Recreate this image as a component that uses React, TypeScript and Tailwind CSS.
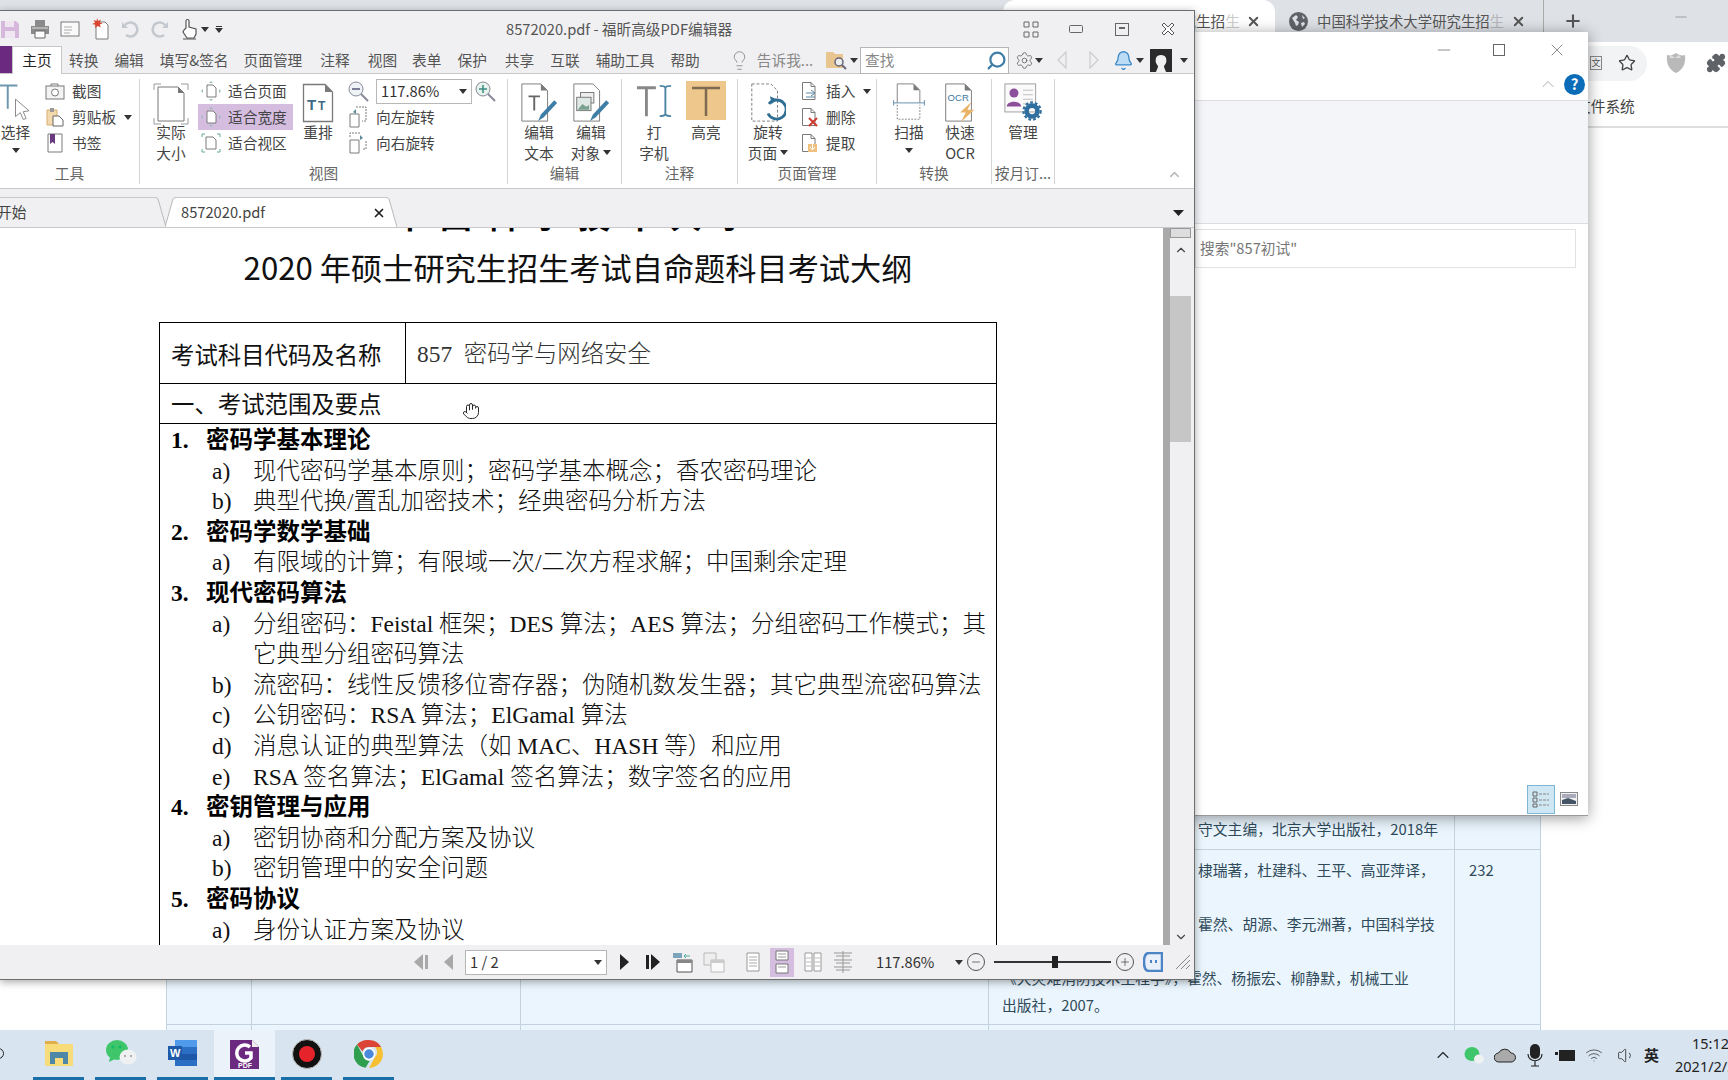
import type { ReactNode } from "react";
import { Hand, Puzzle, Star, X, Plus, Minus, ChevronUp, ChevronDown, Search, Settings, Bell, Lightbulb, Wifi, Volume1 } from "lucide-react";

const S = "#7a7a7a";

function Caret({ className = "" }: { className?: string }) {
  return (
    <svg width="8" height="5" viewBox="0 0 8 5" className={className}>
      <path d="M0 0h8L4 5z" fill="#333" />
    </svg>
  );
}

function Doc({ w = 34, h = 40, dash = false, children }: { w?: number; h?: number; dash?: boolean; children?: ReactNode }) {
  const f = 9;
  return (
    <svg width={w} height={h} viewBox={`0 0 ${w} ${h}`}>
      <path d={`M1.5 1.5H${w - f}L${w - 1.5} ${f}V${h - 1.5}H1.5z`} fill="#fff" stroke={S} strokeWidth="1.3" strokeDasharray={dash ? "3 2" : undefined} />
      <path d={`M${w - f} 1.5V${f}H${w - 1.5}z`} fill={S} />
      {children}
    </svg>
  );
}

function MiniDoc({ children }: { children?: ReactNode }) {
  return (
    <svg width="20" height="20" viewBox="0 0 20 20">
      <path d="M3.5 1.5H12l4 4v13H3.5z" fill="#fff" stroke={S} />
      <path d="M12 1.5v4h4" fill="none" stroke={S} />
      {children}
    </svg>
  );
}

function SmallBtn({ icon, label, active, caret }: { icon: ReactNode; label: string; active?: boolean; caret?: boolean }) {
  return (
    <div className={`flex h-[26px] items-center gap-[7px] pl-[3px] ${active ? "bg-[#d5bde0]" : ""}`}>
      <span className="flex w-[20px] shrink-0 justify-center">{icon}</span>
      <span className="whitespace-nowrap">{label}</span>
      {caret && <Caret className="ml-[1px]" />}
    </div>
  );
}

function BigBtn({ w, icon, lines, caret, caretBelow, hl }: { w: number; icon: ReactNode; lines: string[]; caret?: boolean; caretBelow?: boolean; hl?: boolean }) {
  return (
    <div className="flex shrink-0 flex-col items-center" style={{ width: w }}>
      <div className={`flex h-[42px] w-full items-start justify-center ${hl ? "pt-[2px]" : "pt-[4px]"}`}>{icon}</div>
      {lines.map((l, i) => (
        <div key={i} className="flex h-[21px] items-center justify-center gap-[3px] leading-[21px] whitespace-nowrap">
          {l}
          {caret && i === lines.length - 1 && <Caret />}
        </div>
      ))}
      {caretBelow && (
        <div className="flex h-[17px] items-center">
          <Caret />
        </div>
      )}
    </div>
  );
}

function Group({ w, label, children }: { w: number; label: string; children: ReactNode }) {
  return (
    <div className="flex h-[105px] shrink-0 flex-col border-r border-[#d4d4d6]" style={{ width: w }}>
      <div className="flex h-[84px] items-start">{children}</div>
      <div className="text-center leading-[19px] text-[#666]">{label}</div>
    </div>
  );
}

function QuickIcons() {
  return (
    <div className="flex h-[24px] w-[506px] shrink-0 items-center">
      <svg width="20" height="20" viewBox="0 0 20 20"><path d="M1 2h15l3 3v14H1z" fill="#d6b8dc" /><path d="M5 2h9v6H5zM5 12h10v7H5z" fill="#efe6f1" /></svg>
      <svg width="22" height="22" viewBox="0 0 22 22" className="ml-[9px]"><path d="M6 2h10v6H6zM2 8h18v8H2z" fill="#8b8b8b" /><path d="M6 13h10v7H6z" fill="#fff" stroke="#666" /><path d="M3 10h16" stroke="#ddd" /></svg>
      <svg width="20" height="18" viewBox="0 0 20 18" className="ml-[9px]"><rect x="1" y="2" width="18" height="14" fill="#fafafa" stroke={S} /><path d="M4 7h8M4 10h8M4 13h6" stroke="#aaa" /></svg>
      <svg width="20" height="24" viewBox="0 0 20 24" className="ml-[10px]"><path d="M6 5h9l3 3v14H6z" fill="#fff" stroke={S} /><path d="M7 1l1.2 3L11 2.5 9.8 5.5l3 1-3 1 1 3-3-1.6L5 11l.4-3.2L2 7l3-1.2L3.600 3l3 1z" fill="#d8452f" /></svg>
      <svg width="20" height="20" viewBox="0 0 20 20" className="ml-[10px]"><path d="M5 6a7 7 0 1 1 1 10" fill="none" stroke="#c4c8cf" strokeWidth="2.600" /><path d="M2 3v6h6z" fill="#c4c8cf" /></svg>
      <svg width="20" height="20" viewBox="0 0 20 20" className="ml-[10px]"><path d="M15 6a7 7 0 1 0-1 10" fill="none" stroke="#c4c8cf" strokeWidth="2.600" /><path d="M18 3v6h-6z" fill="#c4c8cf" /></svg>
      <svg width="20" height="22" viewBox="0 0 20 22" className="ml-[10px]"><path d="M6 10V3a1.500 1.500 0 0 1 3 0v6l7 2v5l-2 4H7l-4-6 1-2z" fill="#fff" stroke="#555" strokeWidth="1.200" /><path d="M3 21h13" stroke="#555" /></svg>
      <Caret className="ml-[1px]" />
      <span className="ml-[6px] flex flex-col items-center gap-[1px]"><span className="h-[1px] w-[6px] bg-[#333]" /><Caret /></span>
    </div>
  );
}

function TitleBar() {
  return (
    <div className="flex h-[36px] items-center text-[#555]">
      <QuickIcons />
      <div className="flex-1 text-[14.700px] whitespace-nowrap">8572020.pdf - 福昕高级PDF编辑器</div>
      <div className="flex items-center text-[#555]">
        <svg width="16" height="17" viewBox="0 0 16 17"><path d="M1 1h5v5H1zM10 1h5v5h-5zM1 11h5v5H1zM10 11h5v5h-5z" fill="none" stroke="#666" /></svg>
        <svg width="14" height="8" viewBox="0 0 14 8" className="ml-[30px]"><rect x="0.500" y="0.500" width="13" height="7" rx="1" fill="none" stroke="#666" /></svg>
        <svg width="14" height="13" viewBox="0 0 14 13" className="ml-[32px]"><rect x="0.500" y="0.500" width="13" height="12" fill="none" stroke="#666" /><path d="M4 4h6v2H4z" fill="#666" /></svg>
        <svg width="14" height="14" viewBox="0 0 14 14" className="ml-[32px] mr-[19px]"><path d="M1 3l2-2 4 4 4-4 2 2-4 4 4 4-2 2-4-4-4 4-2-2 4-4z" fill="#fff" stroke="#555" /></svg>
      </div>
    </div>
  );
}

const menus: [string, number][] = [
  ["转换", 7], ["编辑", 16], ["填写&签名", 16], ["页面管理", 15], ["注释", 18], ["视图", 18],
  ["表单", 15], ["保护", 16], ["共享", 18], ["互联", 16], ["辅助工具", 16], ["帮助", 16],
];

function MenuBar() {
  return (
    <div className="flex h-[27px] items-end border-b border-[#c8c8ca]">
      <div className="h-[27px] w-[12px] shrink-0 bg-[#6b2a80]" />
      <div className="-mb-px flex h-[28px] w-[50px] shrink-0 items-center justify-center border border-b-0 border-[#c8c8ca] bg-white text-[#222]">主页</div>
      <div className="flex h-[26px] items-center text-[#555]">
        {menus.map(([m, ml]) => (
          <span key={m} className="whitespace-nowrap" style={{ marginLeft: ml }}>{m}</span>
        ))}
        <Lightbulb size={21} strokeWidth={1} color="#888" className="ml-[29px]" />
        <span className="ml-[7px] whitespace-nowrap text-[#888]">告诉我...</span>
        <svg width="24" height="20" viewBox="0 0 24 20" className="ml-[12px]"><path d="M1 2h7l2 2h8v14H1z" fill="#e9c690" /><circle cx="14" cy="12" r="4" fill="#eee" stroke="#667" strokeWidth="1.500" /><path d="M17 15l4 4" stroke="#667" strokeWidth="2" /></svg>
        <Caret className="ml-[1px]" />
        <div className="ml-[2px] flex h-[27px] w-[149px] items-center justify-between border border-[#b5b5b5] bg-white pr-[1px] pl-[4px] text-[#888]">
          查找
          <Search size={21} strokeWidth={2.500} color="#3f7ea6" className="-scale-x-100" />
        </div>
        <Settings size={19} strokeWidth={1.100} color="#666" className="ml-[6px]" />
        <Caret className="ml-[1px]" />
        <svg width="12" height="18" viewBox="0 0 12 18" className="ml-[13px]"><path d="M10 1L2 9l8 8z" fill="none" stroke="#ccc" strokeWidth="1.200" /></svg>
        <svg width="12" height="18" viewBox="0 0 12 18" className="ml-[20px]"><path d="M2 1l8 8-8 8z" fill="none" stroke="#ccc" strokeWidth="1.200" /></svg>
        <Bell size={21} strokeWidth={1.500} color="#3c88c7" fill="#bcdcf5" className="ml-[13px]" />
        <Caret className="ml-[2px]" />
        <svg width="22" height="23" viewBox="0 0 22 23" className="ml-[6px]"><rect width="22" height="23" fill="#2b2b2b" /><path d="M6 23c1-3 2-4 2-6-2-2-3-5-2-8 1-4 9-4 10 0 1 3 0 6-2 8 0 2 1 3 2 6z" fill="#f1f1f1" /></svg>
        <Caret className="ml-[8px]" />
      </div>
    </div>
  );
}

function Ribbon() {
  const fitIcon = (
    <svg width="20" height="20" viewBox="0 0 20 20"><path d="M6 4h6l3 3v9H6z" fill="#fff" stroke={S} /><path d="M10 0l2 2H8zM10 20l-2-2h4zM0 10l2-2v4zM20 10l-2 2V8z" fill="#9bb" /></svg>
  );
  return (
    <div className="flex h-[114px] bg-white pt-[5px] text-[14.700px] leading-none text-[#444]">
      <div className="flex h-[105px] w-[1055px] shrink-0">
        <Group w={140} label="工具">
          <BigBtn
            w={31}
            lines={["选择"]}
            caretBelow
            icon={
              <svg width="32" height="40" viewBox="0 0 32 40"><path d="M-2 2h20M8 2v24" stroke="#6e97ad" strokeWidth="2" fill="none" /><path d="M16 16l0 18 5-4 3 7 3-1-3-7 6-1z" fill="#fff" stroke="#888" /></svg>
            }
          />
          <div className="-mt-[1px] ml-[11px]">
            <SmallBtn label="截图" icon={<svg width="20" height="17" viewBox="0 0 20 17"><rect x="1" y="3" width="18" height="13" fill="#f4f4f4" stroke={S} /><circle cx="10" cy="9.500" r="3.500" fill="#fff" stroke={S} /><path d="M6 3V1h7v2" fill="none" stroke={S} /></svg>} />
            <SmallBtn label="剪贴板" caret icon={<svg width="20" height="20" viewBox="0 0 20 20"><path d="M2 3h10v15H2z" fill="#f3d9ae" stroke="#d6ad6f" /><path d="M5 1h4v4H5z" fill="#999" /><path d="M8 9h6l4 4v6H8z" fill="#fff" stroke="#666" /></svg>} />
            <SmallBtn label="书签" icon={<svg width="16" height="20" viewBox="0 0 16 20"><path d="M1 1h14v18H1z" fill="#fff" stroke={S} /><path d="M3 1h5v10l-2.500-2L3 11z" fill="#6a3a80" /></svg>} />
          </div>
        </Group>
        <Group w={368} label="视图">
          <div className="ml-[5px]">
            <BigBtn
              w={52}
              lines={["实际", "大小"]}
              icon={
                <svg width="36" height="42" viewBox="0 0 36 42">
                  <path d="M1 7V1h7M28 1h7v6M1 35v6h7M28 41h7v-6" fill="none" stroke="#9a9a9a" />
                  <path d="M5 4h20l6 6v28H5z" fill="#fff" stroke="#777" />
                  <path d="M25 4v6h6z" fill="#777" />
                </svg>
              }
            />
          </div>
          <div className="-mt-[1px] ml-[1px] w-[95px] shrink-0">
            <SmallBtn label="适合页面" icon={fitIcon} />
            <SmallBtn label="适合宽度" active icon={fitIcon} />
            <SmallBtn label="适合视区" icon={<svg width="20" height="20" viewBox="0 0 20 20"><path d="M1 4V1h3M16 1h3v3M1 16v3h3M16 19h3v-3" fill="none" stroke="#6a9" /><path d="M5 4h7l3 3v9H5z" fill="#fff" stroke={S} /></svg>} />
          </div>
          <BigBtn
            w={50}
            lines={["重排"]}
            icon={
              <Doc w={32} h={40}>
                <text x="5" y="27" fontSize="15" fontWeight="700" fill="#3d6b85" fontFamily="Liberation Sans">T</text>
                <text x="16" y="27" fontSize="12" fontWeight="700" fill="#3d6b85" fontFamily="Liberation Sans">T</text>
              </Doc>
            }
          />
          <div className="-mt-[1px] ml-[3px] w-[165px]">
            <div className="flex h-[26px] items-center">
              <svg width="24" height="24" viewBox="0 0 24 24"><circle cx="10" cy="10" r="7" fill="#eef4f6" stroke="#889" /><path d="M6 10h8" stroke="#557" strokeWidth="1.500" /><path d="M15 15l7 7" stroke="#889" strokeWidth="2" /></svg>
              <div className="ml-[6px] flex h-[25px] w-[96px] items-center justify-between border border-[#b8b8b8] pr-[4px] pl-[4px] text-[#333]">
                117.86%
                <Caret />
              </div>
              <svg width="24" height="24" viewBox="0 0 24 24" className="ml-[1px]"><circle cx="10" cy="10" r="7" fill="#e6f2ec" stroke="#889" /><path d="M6 10h8M10 6v8" stroke="#3a8a80" strokeWidth="1.500" /><path d="M15 15l7 7" stroke="#889" strokeWidth="2" /></svg>
            </div>
            <div className="flex h-[26px] items-center gap-[8px] pl-[2px]">
              <svg width="20" height="22" viewBox="0 0 20 22"><path d="M2 8h9v13H2z" fill="#fff" stroke={S} /><path d="M8 1h10v14h-4" fill="none" stroke={S} strokeDasharray="2 1" /><path d="M5 6l3-3v5z" fill="#5d8a9b" /></svg>
              <span>向左旋转</span>
            </div>
            <div className="flex h-[26px] items-center gap-[8px] pl-[2px]">
              <svg width="20" height="22" viewBox="0 0 20 22"><path d="M2 8h9v13H2z" fill="#fff" stroke={S} /><path d="M2 5V1h10M18 9v8h-4" fill="none" stroke={S} strokeDasharray="2 1" /><path d="M15 6l-3-3v5z" fill="#5d8a9b" /></svg>
              <span>向右旋转</span>
            </div>
          </div>
        </Group>
        <Group w={114} label="编辑">
          <div className="ml-[2px] flex">
            <BigBtn
              w={58}
              lines={["编辑", "文本"]}
              icon={
                <svg width="38" height="40" viewBox="0 0 38 42">
                  <path d="M1 1h20l7 7v32H1z" fill="#fff" stroke={S} />
                  <path d="M21 1v7h7z" fill={S} />
                  <path d="M8 14h12M14 14v15" stroke="#666" strokeWidth="2" />
                  <path d="M18 40l3-7 14-15 3 3-14 15z" fill="#3e7da5" />
                </svg>
              }
            />
            <BigBtn
              w={46}
              lines={["编辑", "对象"]}
              caret
              icon={
                <svg width="38" height="40" viewBox="0 0 38 42">
                  <path d="M1 1h20l7 7v32H1z" fill="#fff" stroke={S} />
                  <rect x="8" y="10" width="14" height="11" fill="#eee" stroke="#777" />
                  <rect x="4" y="15" width="15" height="14" fill="#dfe8e5" stroke="#777" />
                  <path d="M5 28l5-6 4 3 3-2v5z" fill="#7aa08f" />
                  <path d="M18 40l3-7 14-15 3 3-14 15z" fill="#3e7da5" />
                </svg>
              }
            />
          </div>
        </Group>
        <Group w={116} label="注释">
          <div className="ml-[6px] flex">
            <BigBtn
              w={52}
              lines={["打", "字机"]}
              icon={
                <svg width="40" height="36" viewBox="0 0 40 38">
                  <path d="M2 5h20M12 5v30" stroke="#888" strokeWidth="3" fill="none" />
                  <path d="M26 3c3 0 5 0 6 2 1-2 3-2 6-2M32 5v28M26 35c3 0 5 0 6-2 1 2 3 2 6 2" stroke="#4f86a6" strokeWidth="2" fill="none" />
                </svg>
              }
            />
            <div className="ml-[6px]">
              <BigBtn
                w={40}
                lines={["高亮"]}
                hl
                icon={
                  <div className="flex h-[39px] w-[40px] justify-center bg-[#edc78c] pt-[5px]">
                    <svg width="28" height="30" viewBox="0 0 28 30"><path d="M0 2h28M14 2v28" stroke="#7d6a50" strokeWidth="2.500" fill="none" /></svg>
                  </div>
                }
              />
            </div>
          </div>
        </Group>
        <Group w={139} label="页面管理">
          <div className="ml-[4px]">
            <BigBtn
              w={52}
              lines={["旋转", "页面"]}
              caret
              icon={
                <svg width="36" height="40" viewBox="0 0 36 42">
                  <path d="M1 1h20l7 7v32H1z" fill="#fff" stroke={S} strokeDasharray="3 2" />
                  <path d="M19 25a10 10 0 1 1-1 10" fill="none" stroke="#2f6f93" strokeWidth="3" transform="translate(0,-3)" />
                  <path d="M20 14l7 3-5 5z" fill="#2f6f93" />
                </svg>
              }
            />
          </div>
          <div className="-mt-[1px] ml-[2px]">
            <SmallBtn label="插入" caret icon={<MiniDoc><path d="M7 12h9M12 9l4 3-4 3M16 16H7" stroke="#5a88a5" fill="none" /></MiniDoc>} />
            <SmallBtn label="删除" icon={<MiniDoc><path d="M10 11l8 8M18 11l-8 8" stroke="#d03a30" strokeWidth="2" /></MiniDoc>} />
            <SmallBtn label="提取" icon={<MiniDoc><path d="M9 11h9v8H9z" fill="#eec27e" /><path d="M13.500 11v5M11 14l2.500 3 2.500-3" stroke="#fff" fill="none" /></MiniDoc>} />
          </div>
        </Group>
        <Group w={115} label="转换">
          <div className="ml-[6px] flex">
            <BigBtn
              w={52}
              lines={["扫描"]}
              caretBelow
              icon={
                <svg width="36" height="38" viewBox="0 0 36 42">
                  <path d="M5 22V1h18l7 7v14" fill="#fff" stroke={S} />
                  <path d="M23 1v7h7z" fill={S} />
                  <path d="M1 22h34M1 19v6M35 19v6" stroke="#5a88a5" />
                  <path d="M5 24v16h25V24" fill="none" stroke={S} strokeDasharray="2 1.500" />
                </svg>
              }
            />
            <BigBtn
              w={50}
              lines={["快速", "OCR"]}
              icon={
                <svg width="32" height="40" viewBox="0 0 32 42">
                  <path d="M1 1h20l7 7v32H1z" fill="#fff" stroke={S} />
                  <path d="M21 1v7h7z" fill={S} />
                  <text x="3" y="19" fontSize="10" fill="#3d79a0" fontFamily="Liberation Sans">OCR</text>
                  <path d="M28 20L16 31h6l-5 10 14-13h-7z" fill="#eab468" />
                </svg>
              }
            />
          </div>
        </Group>
        <Group w={63} label="按月订...">
          <BigBtn
            w={62}
            lines={["管理"]}
            icon={
              <svg width="42" height="38" viewBox="0 0 42 42">
                <rect x="1" y="1" width="34" height="31" fill="#fafafa" stroke="#999" />
                <circle cx="11" cy="11" r="5" fill="#8d4f9b" />
                <path d="M3 26c0-7 16-7 16 0z" fill="#8d4f9b" />
                <path d="M21 8h11M21 13h11M21 18h11M21 23h8" stroke="#bbb" />
                <circle cx="31" cy="31" r="6" fill="none" stroke="#2f6f9f" strokeWidth="5" />
                <circle cx="31" cy="31" r="9.500" fill="none" stroke="#2f6f9f" strokeWidth="2.500" strokeDasharray="3 2.300" />
              </svg>
            }
          />
        </Group>
      </div>
      <div className="flex flex-1 items-end justify-end pr-[12px] pb-[6px]">
        <ChevronUp size={15} strokeWidth={2.500} color="#bbb" />
      </div>
    </div>
  );
}

function Slant({ flip = false, fill }: { flip?: boolean; fill: string }) {
  return (
    <svg width="11" height="30" viewBox="0 0 11 30" className={`shrink-0 ${flip ? "-scale-x-100" : ""}`}>
      <path d="M0 30L8 2Q9 .5 11 .5V30z" fill={fill} />
      <path d="M0 30L8 2Q9 .5 11 .5" fill="none" stroke="#b8b8ba" />
    </svg>
  );
}

function FileTabs() {
  return (
    <div className="flex h-[40px] items-end border-y border-[#c8c8ca] bg-[#f0f0f2]">
      <div className="flex h-[30px] w-[155px] shrink-0 items-center overflow-hidden border-t border-[#c8c8ca] text-[14.700px] text-[#444]">
        <span className="-ml-[3px]">开始</span>
      </div>
      <Slant flip fill="#f0f0f2" />
      <div className="-ml-[1px]">
        <Slant fill="#fff" />
      </div>
      <div className="flex h-[30px] w-[210px] shrink-0 items-center justify-between border-t border-[#c8c8ca] bg-white pl-[5px] text-[14.700px] text-[#444]">
        8572020.pdf
        <X size={14} strokeWidth={3} color="#222" />
      </div>
      <Slant flip fill="#fff" />
      <div className="flex-1" />
      <div className="mr-[10px] mb-[11px]">
        <svg width="11" height="6" viewBox="0 0 11 6"><path d="M0 0h11L5.500 6z" fill="#222" /></svg>
      </div>
    </div>
  );
}

const serif = "[font-family:'Liberation_Serif','Noto_Sans_CJK_SC',serif]";

type Line = { n?: string; a?: string; t: string };

const lines: Line[] = [
  { n: "1.", t: "密码学基本理论" },
  { a: "a)", t: "现代密码学基本原则；密码学基本概念；香农密码理论" },
  { a: "b)", t: "典型代换/置乱加密技术；经典密码分析方法" },
  { n: "2.", t: "密码学数学基础" },
  { a: "a)", t: "有限域的计算；有限域一次/二次方程求解；中国剩余定理" },
  { n: "3.", t: "现代密码算法" },
  { a: "a)", t: "分组密码：Feistal 框架；DES 算法；AES 算法；分组密码工作模式；其" },
  { t: "它典型分组密码算法" },
  { a: "b)", t: "流密码：线性反馈移位寄存器；伪随机数发生器；其它典型流密码算法" },
  { a: "c)", t: "公钥密码：RSA 算法；ElGamal 算法" },
  { a: "d)", t: "消息认证的典型算法（如 MAC、HASH 等）和应用" },
  { a: "e)", t: "RSA 签名算法；ElGamal 签名算法；数字签名的应用" },
  { n: "4.", t: "密钥管理与应用" },
  { a: "a)", t: "密钥协商和分配方案及协议" },
  { a: "b)", t: "密钥管理中的安全问题" },
  { n: "5.", t: "密码协议" },
  { a: "a)", t: "身份认证方案及协议" },
  { a: "b)", t: "密钥交换协议" },
];

function DocPage() {
  return (
    <div className="relative min-w-0 flex-1 overflow-hidden bg-white pl-[159px]">
      <div className="w-[838px]">
        <div className="flex h-[19px] items-end justify-center overflow-hidden">
          <div className="mb-[11px] text-[32px] leading-[44px] font-bold tracking-[14px] whitespace-nowrap text-black [font-family:'Noto_Sans_CJK_SC',sans-serif]">中国科学技术大学</div>
        </div>
        <div className="h-[40px] text-center text-[31.200px] leading-[40px] whitespace-nowrap text-[#111] [font-family:'Noto_Sans_CJK_SC',sans-serif]">
          2020 年硕士研究生招生考试自命题科目考试大纲
        </div>
        <div className="mt-[35px] border-x border-t border-black">
          <div className="flex h-[61px] border-b border-black">
            <div className="flex w-[246px] shrink-0 items-center border-r border-black pt-[3px] pl-[11px] text-[23.400px] text-[#111] [font-family:'Noto_Sans_CJK_SC',sans-serif]">考试科目代码及名称</div>
            <div className={`flex items-center pt-[4px] pl-[11px] text-[23.400px] font-light whitespace-pre text-[#333] ${serif}`}>857  密码学与网络安全</div>
          </div>
          <div className="flex h-[40px] items-center border-b border-black pl-[11px] text-[23.400px] text-[#111] [font-family:'Noto_Sans_CJK_SC',sans-serif]">
            一、考试范围及要点
          </div>
          <div className={`pt-[1px] pl-[11px] text-[23.500px] leading-[30.600px] whitespace-nowrap text-[#111] ${serif}`}>
            {lines.map((l, i) =>
              l.n ? (
                <div key={i} className="flex font-bold text-black">
                  <span className="w-[35px]">{l.n}</span>
                  {l.t}
                </div>
              ) : (
                <div key={i} className="flex font-light">
                  <span className="ml-[41px] w-[41px]">{l.a}</span>
                  {l.t}
                </div>
              ),
            )}
          </div>
        </div>
      </div>
      <Hand size={18} strokeWidth={1.300} color="#222" fill="#fff" className="absolute top-[174px] left-[462px]" />
    </div>
  );
}

function Scrollbar() {
  return (
    <div className="flex w-[31px] shrink-0">
      <div className="w-[7px] bg-[#a9a9a9]" />
      <div className="flex flex-1 flex-col items-center bg-[#f0eff1] pr-[3px]">
        <div className="h-[10px] w-full border border-[#999] bg-[#ddd]" />
        <ChevronUp size={14} strokeWidth={2} color="#444" className="mt-[5px]" />
        <div className="mt-[39px] h-[146px] w-full bg-[#c6c6c6]" />
        <div className="flex-1" />
        <ChevronDown size={14} strokeWidth={2} color="#444" className="mb-[1px]" />
      </div>
    </div>
  );
}

function StatusBar() {
  const g = "#a8a8a8";
  return (
    <div className="flex h-[34px] shrink-0 items-center bg-[#f0eff1] text-[14.700px] text-[#333]">
      <svg width="16" height="18" viewBox="0 0 16 18" className="ml-[413px]"><path d="M12 2h3v14h-3zM10 1v16L1 9z" fill={g} /></svg>
      <svg width="11" height="16" viewBox="0 0 11 16" className="ml-[14px]"><path d="M10 0v16L1 8z" fill={g} /></svg>
      <div className="ml-[11px] flex h-[25px] w-[142px] items-center justify-between border border-[#b5b5b5] bg-white pr-[4px] pl-[4px]">
        1 / 2
        <Caret />
      </div>
      <svg width="11" height="16" viewBox="0 0 11 16" className="ml-[12px]"><path d="M1 0v16l9-8z" fill="#222" /></svg>
      <svg width="16" height="18" viewBox="0 0 16 18" className="ml-[15px]"><path d="M1 2h3v14H1zM6 1v16l9-8z" fill="#222" /></svg>
      <svg width="22" height="22" viewBox="0 0 22 22" className="ml-[11px]"><path d="M1 2h9v5H1z" fill="#7aa5bc" /><path d="M5 9h15v12H5z" fill="#fff" stroke="#555" /><path d="M5 9h15v3H5z" fill="#888" /><path d="M18 5h-6m2-2l-2 2 2 2" stroke="#5a9" fill="none" /></svg>
      <svg width="22" height="22" viewBox="0 0 22 22" className="ml-[9px]"><path d="M1 2h12v12H1z" fill="#eee" stroke="#bbb" /><path d="M8 9h13v12H8z" fill="#fafafa" stroke="#bbb" /><path d="M8 9h13v3H8z" fill="#ccc" /></svg>
      <svg width="14" height="20" viewBox="0 0 14 20" className="ml-[21px]"><path d="M1 1h12v18H1z" fill="#fff" stroke="#999" /><path d="M3 5h8M3 8h8M3 11h8M3 14h8" stroke="#aaa" /></svg>
      <div className="ml-[10px] flex h-[29px] w-[24px] items-center justify-center bg-[#d5bde0]">
        <svg width="14" height="24" viewBox="0 0 14 24"><path d="M1 1h12v9H1zM1 14h12v9H1z" fill="#fff" stroke="#777" /><path d="M3 4h8M3 7h8M3 17h8" stroke="#999" /></svg>
      </div>
      <svg width="18" height="20" viewBox="0 0 18 20" className="ml-[10px]"><path d="M1 1h7v18H1zM10 1h7v18h-7z" fill="#fff" stroke="#999" /><path d="M2 6h5M2 10h5M2 14h5M11 6h5M11 10h5M11 14h5" stroke="#bbb" /></svg>
      <svg width="20" height="22" viewBox="0 0 20 22" className="ml-[11px]"><path d="M10 0v22M1 2h18M3 5h14M1 9h18M3 12h14M1 16h18M3 19h14" stroke="#999" fill="none" /></svg>
      <span className="ml-[23px] whitespace-nowrap">117.86%</span>
      <span className="ml-auto flex items-center pr-[1px]">
        <Caret />
        <span className="ml-[4px] flex h-[18px] w-[18px] items-center justify-center rounded-full border border-[#555]"><Minus size={12} strokeWidth={1.300} color="#333" /></span>
        <span className="relative ml-[9px] h-[1.500px] w-[117px] bg-[#333]"><span className="absolute top-[-5px] left-[58px] h-[12px] w-[6px] bg-[#222]" /></span>
        <span className="ml-[5px] flex h-[18px] w-[18px] items-center justify-center rounded-full border border-[#555]"><Plus size={12} strokeWidth={1.300} color="#333" /></span>
        <svg width="20" height="20" viewBox="0 0 20 20" className="ml-[9px]"><path d="M6 1h13v18H6C3 19 1 16 1 10S3 1 6 1z" fill="#e9f0fa" stroke="#4d84c6" strokeWidth="2.500" /><path d="M8 8v3M13 8v3" stroke="#4d84c6" strokeWidth="2" /></svg>
        <svg width="16" height="16" viewBox="0 0 16 16" className="ml-[12px]"><path d="M1 15L15 1M6 15l9-9M11 15l4-4" stroke="#888" fill="none" /></svg>
        <span className="w-[2px]" />
      </span>
    </div>
  );
}

function PdfWindow() {
  return (
    <div className="absolute top-[10px] left-0 flex h-[970px] w-[1195px] flex-col overflow-hidden border-t border-r border-b border-[#6e6e6e] bg-[#f0f0f2] text-[14.700px] shadow-[0_2px_8px_rgba(0,0,0,0.35)]">
      <TitleBar />
      <MenuBar />
      <Ribbon />
      <FileTabs />
      <div className="flex min-h-0 flex-1">
        <DocPage />
        <Scrollbar />
      </div>
      <StatusBar />
    </div>
  );
}

function SideWindow() {
  return (
    <div className="absolute top-[32px] left-[1190px] flex h-[784px] w-[398px] flex-col bg-white pl-[5px] shadow-[0_2px_14px_rgba(0,0,0,0.4)]">
      <div className="flex h-[36px] items-center justify-end pr-[21px]">
        <Minus size={20} strokeWidth={0.800} color="#555" />
        <svg width="12" height="12" viewBox="0 0 12 12" className="ml-[39px]"><rect x="0.500" y="0.500" width="11" height="11" fill="none" stroke="#666" /></svg>
        <X size={20} strokeWidth={0.800} color="#555" className="ml-[42px]" />
      </div>
      <div className="flex h-[33px] items-center justify-end border-b border-[#ddd] pr-[3px]">
        <ChevronUp size={20} strokeWidth={1} color="#999" />
        <span className="ml-[6px] flex h-[21px] w-[21px] items-center justify-center rounded-full bg-[#0b6cb8] text-[15px] font-bold text-white">?</span>
      </div>
      <div className="h-[123px] border-b border-[#ddd] bg-[#f4f5f9]" />
      <div className="pt-[5px] pr-[12px]">
        <div className="flex h-[39px] items-center border border-[#e2e2e2] pl-[4px] text-[14.700px] text-[#777]">搜索"857初试"</div>
      </div>
      <div className="flex-1" />
      <div className="flex h-[32px] items-center justify-end gap-[5px] border-b border-[#999] pr-[10px] pb-[1px]">
        <span className="flex h-[29px] w-[28px] items-center justify-center border border-[#7fb6d5] bg-[#cfe6f3]">
          <svg width="18" height="18" viewBox="0 0 18 18"><path d="M1 2h4v4H1zM1 8h4v4H1zM1 14h4v3H1z" fill="none" stroke="#666" /><path d="M7 4h10M7 10h10M7 15h10" stroke="#888" strokeDasharray="3 1" /></svg>
        </span>
        <svg width="18" height="14" viewBox="0 0 18 14"><rect x="0.500" y="0.500" width="17" height="13" fill="#f2f2f2" stroke="#888" /><path d="M2 2h14v4H2z" fill="#aab" /><path d="M2 8l6-2 8 3v3H2z" fill="#456" /></svg>
      </div>
    </div>
  );
}

function Browser() {
  const cell = "border-r border-[#c3d2dd]";
  return (
    <div className="flex min-h-0 flex-1 flex-col bg-white">
      <div className="flex h-[42px] shrink-0 items-end bg-[#dee1e6] text-[14.700px] text-[#555]">
        <div className="ml-[1003px] flex h-[42px] w-[272px] items-center justify-end rounded-t-[12px] bg-white pr-[14px]">
          <span className="whitespace-nowrap">研究生招<span className="opacity-30">生</span></span>
          <X size={15} strokeWidth={3} color="#555" className="ml-[6px]" />
        </div>
        <div className="flex h-[42px] w-[269px] items-center border-r border-[#aaa] pl-[14px]">
          <svg width="19" height="19" viewBox="0 0 19 19"><circle cx="9.500" cy="9.500" r="9.500" fill="#5f6368" /><path d="M3 6l4-3 2 2-2 3 3 2-1 3-2 1-1-3zM13 3l3 3-2 1zM12 11l3-1 1 2-3 3z" fill="#dee1e6" /></svg>
          <span className="ml-[9px] text-[14.400px] whitespace-nowrap">中国科学技术大学研究生招<span className="opacity-30">生</span></span>
          <X size={15} strokeWidth={3} color="#555" className="ml-[7px]" />
        </div>
        <div className="flex h-[42px] flex-1 items-center">
          <Plus size={20} strokeWidth={2.500} color="#555" className="ml-[19px]" />
          <Minus size={18} strokeWidth={0.800} color="#777" className="mb-[8px] ml-[89px]" />
        </div>
      </div>
      <div className="flex h-[42px] shrink-0 items-center bg-white">
        <div className="ml-[1400px] flex h-[35px] w-[247px] items-center justify-end rounded-r-full bg-[#f1f3f4] pr-[11px]">
          <span className="mr-[16px] flex h-[14px] w-[12px] items-center justify-center border border-[#888] text-[9px] text-[#555]">文</span>
          <Star size={18} strokeWidth={1.800} color="#444" />
        </div>
        <svg width="20" height="22" viewBox="0 0 20 22" className="ml-[19px]"><path d="M1 3c3 1 6 0 9-2 3 2 6 3 9 2 1 8-2 15-9 18C3 18 0 11 1 3z" fill="#b9b9b9" /><path d="M5 3l4 3 4-3 2 3H3z" fill="#ddd" /></svg>
        <Puzzle size={20} color="#5f6368" fill="#5f6368" className="ml-[20px]" />
      </div>
      <div className="h-[44px] shrink-0 border-b-2 border-[#dedede] pt-[11px] pl-[1576px] text-[14.700px] text-[#444]">文件系统</div>
      <div className="min-h-0 flex-1 overflow-hidden">
        <div className="mt-[571px] ml-[166px] w-[1375px] border-x border-[#c3d2dd] bg-[#eaf5fd] text-[14.800px] text-[#2f4a5a] [font-family:'Noto_Sans_CJK_SC',sans-serif]">
          <div className="grid h-[151px] grid-cols-[85px_269px_468px_466px_85px] border-b border-[#c3d2dd]">
            <div className={cell} />
            <div className={cell} />
            <div className={cell} />
            <div className={`${cell} pt-[118px] pl-[209px] leading-[24px] whitespace-nowrap`}>守文主编，北京大学出版社，2018年</div>
            <div />
          </div>
          <div className="grid h-[175px] grid-cols-[85px_269px_468px_466px_85px] border-b border-[#c3d2dd]">
            <div className={cell} />
            <div className={cell} />
            <div className={cell} />
            <div className={`${cell} pt-[8px] pl-[13px] leading-[24px] whitespace-nowrap`}>
              <div className="h-[54px] pl-[196px]">棣瑞著，杜建科、王平、高亚萍译，</div>
              <div className="h-[54px] pl-[196px]">霍然、胡源、李元洲著，中国科学技</div>
              <div className="h-[27px]">《大灾难消防技术工程学》，霍然、杨振宏、柳静默，机械工业</div>
              <div>出版社，2007。</div>
            </div>
            <div className="pt-[8px] pl-[14px] leading-[24px]">232</div>
          </div>
          <div className="grid h-[10px] grid-cols-[85px_269px_468px_466px_85px]">
            <div className={cell} />
            <div className={cell} />
            <div className={cell} />
            <div className={cell} />
            <div />
          </div>
        </div>
      </div>
    </div>
  );
}

function Taskbar() {
  const apps: [number, number, boolean, ReactNode][] = [
    [33, 51, false, <svg key="f" width="30" height="28" viewBox="0 0 30 28"><path d="M1 2h11l3 3H1z" fill="#e0ae4a" /><path d="M1 5h28v22H1z" fill="#f9dc7a" /><path d="M6 25V13h18v12h-5v-6h-8v6z" fill="#4f87a8" /></svg>],
    [11, 51, false, <svg key="w" width="32" height="26" viewBox="0 0 32 26"><ellipse cx="12" cy="11" rx="11" ry="10" fill="#3fc56a" /><path d="M5 18l-1 5 6-3z" fill="#3fc56a" /><circle cx="8" cy="8" r="1.500" fill="#1b6" /><circle cx="15" cy="8" r="1.500" fill="#1b6" /><ellipse cx="23" cy="18" rx="8.500" ry="7.500" fill="#eef0f2" /><circle cx="20" cy="17" r="1" fill="#999" /><circle cx="26" cy="17" r="1" fill="#999" /></svg>],
    [11, 51, false, <svg key="wd" width="30" height="28" viewBox="0 0 30 28"><path d="M7 1h22v26H7z" fill="#2a6fc4" /><path d="M7 1h22v7H7z" fill="#4f9bea" /><path d="M7 15h22v6H7z" fill="#1d58a8" /><rect y="7" width="14" height="14" fill="#1e5aa8" /><text x="2" y="18" fontSize="11" fontWeight="700" fill="#fff" fontFamily="Liberation Sans">W</text></svg>],
    [6, 61, true, <svg key="p" width="31" height="31" viewBox="0 0 31 31"><path d="M1 1h22l7 7v22H1z" fill="#6b2a80" /><path d="M23 1l7 7h-7z" fill="#eee" /><path d="M21 8a8 8 0 1 0 1 11v-5h-6" fill="none" stroke="#fff" strokeWidth="3.500" /><text x="9" y="29" fontSize="7" fontWeight="700" fill="#fff" fontFamily="Liberation Sans">PDF</text></svg>],
    [6, 51, false, <svg key="r" width="30" height="30" viewBox="0 0 30 30"><circle cx="15" cy="15" r="14.500" fill="#111" stroke="#bbb" /><circle cx="15" cy="15" r="8" fill="#e5232b" /></svg>],
    [11, 51, false, <svg key="c" width="30" height="30" viewBox="0 0 30 30"><path d="M15 1a14 14 0 0 1 12.100 7H15a7 7 0 0 0-6.500 4.400L3 5.500A14 14 0 0 1 15 1z" fill="#dc4437" /><path d="M27.100 8A14 14 0 0 1 15 29l5.700-10.600A7 7 0 0 0 21 8z" fill="#f6c032" /><path d="M3 5.500l6 11a7 7 0 0 0 6.600 5.400l-4 6.800A14 14 0 0 1 3 5.500z" fill="#2f9e4f" /><circle cx="15" cy="15" r="5.500" fill="#4a89dc" stroke="#fff" strokeWidth="1.500" /></svg>],
  ];
  return (
    <div className="flex h-[50px] shrink-0 bg-[#d8e5f1] text-[#222]">
      <div className="relative flex w-[33px] shrink-0 items-center">
        <span className="-ml-[7px] mb-[3px] h-[11px] w-[11px] rounded-full border border-[#222]" />
      </div>
      {apps.map(([ml, w, active, icon], i) => (
        <div key={i} className={`flex h-[50px] shrink-0 flex-col items-center border-b-[3px] border-[#1a6fa8] pt-[9px] ${active ? "bg-[#ebf2f9]" : ""}`} style={{ marginLeft: i === 0 ? 0 : ml, width: w }}>
          {icon}
        </div>
      ))}
      <div className="ml-auto flex items-center text-[#222]">
        <ChevronUp size={20} strokeWidth={1.300} color="#222" />
        <svg width="20" height="18" viewBox="0 0 20 18" className="ml-[11px]"><ellipse cx="8" cy="8" rx="7.500" ry="7" fill="#3fc56a" /><ellipse cx="15" cy="13" rx="5" ry="4.500" fill="#eef0f2" /></svg>
        <svg width="22" height="16" viewBox="0 0 22 16" className="ml-[10px]"><path d="M5 15a4.500 4.500 0 0 1-.5-9A7 7 0 0 1 17 6a4.500 4.500 0 0 1 0 9z" fill="#aaa" stroke="#222" /></svg>
        <svg width="16" height="24" viewBox="0 0 16 24" className="ml-[11px]"><rect x="3" y="1" width="10" height="15" rx="5" fill="#222" /><path d="M1 11c0 9 14 9 14 0M8 18v5M4 23h8" fill="none" stroke="#222" strokeWidth="1.200" /></svg>
        <svg width="20" height="13" viewBox="0 0 20 13" className="ml-[12px]"><path d="M0 3h3v3H0z" fill="#222" /><rect x="4.500" y="1.500" width="15" height="10" fill="#222" stroke="#222" /></svg>
        <Wifi size={18} strokeWidth={1} color="#333" className="ml-[10px]" />
        <Volume1 size={19} strokeWidth={1.100} color="#333" className="ml-[14px]" />
        <span className="ml-[8px] text-[15px] font-bold">英</span>
        <div className="ml-[16px] w-[53px] overflow-hidden text-[14.500px] leading-[23px] whitespace-nowrap [font-family:'Noto_Sans',sans-serif]">
          <div className="pl-[17px]">15:12</div>
          <div>2021/2/25</div>
        </div>
      </div>
    </div>
  );
}

export default function App() {
  return (
    <div className="relative flex h-[1080px] w-[1728px] flex-col overflow-hidden bg-white [font-family:'Noto_Sans_CJK_SC','Noto_Sans',sans-serif]">
      <Browser />
      <Taskbar />
      <SideWindow />
      <PdfWindow />
    </div>
  );
}
